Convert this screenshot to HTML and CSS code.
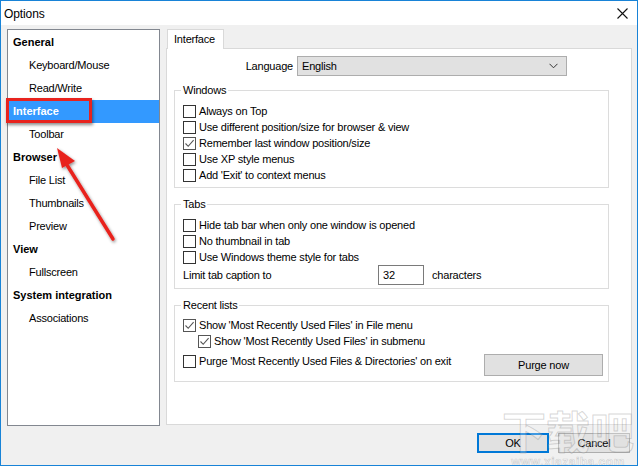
FILE: index.html
```html
<!DOCTYPE html>
<html>
<head>
<meta charset="utf-8">
<link rel="stylesheet" href="styles.css">
</head>
<body>
<div class="window">
  <div class="titlebar">
    <span class="title">Options</span>
    <svg class="close" width="11" height="11" viewBox="0 0 11 11"><path d="M0.5 0.5L10.5 10.5M10.5 0.5L0.5 10.5" stroke="#111" stroke-width="1.1" fill="none"/></svg>
  </div>
  <div class="body">
    <div class="main">
      <ul class="tree">
        <li class="cat">General</li>
        <li class="sub">Keyboard/Mouse</li>
        <li class="sub">Read/Write</li>
        <li class="cat sel">Interface</li>
        <li class="sub">Toolbar</li>
        <li class="cat">Browser</li>
        <li class="sub">File List</li>
        <li class="sub">Thumbnails</li>
        <li class="sub">Preview</li>
        <li class="cat">View</li>
        <li class="sub">Fullscreen</li>
        <li class="cat">System integration</li>
        <li class="sub">Associations</li>
      </ul>
      <div class="right">
        <div class="tabs"><div class="tab">Interface</div></div>
        <div class="panel">
          <div class="lang-row">
            <span class="lang-label">Language</span>
            <div class="select"><span>English</span>
              <svg class="chev" width="9" height="6" viewBox="0 0 9 6"><path d="M0.5 0.8L4.5 4.8L8.5 0.8" stroke="#333" stroke-width="1" fill="none"/></svg>
            </div>
          </div>
          <fieldset class="group g-win">
            <legend>Windows</legend>
            <div class="cbrow"><span class="cb"></span>Always on Top</div>
            <div class="cbrow"><span class="cb"></span>Use different position/size for browser &amp; view</div>
            <div class="cbrow"><span class="cb on"><svg width="11" height="11" viewBox="0 0 11 11"><path d="M1.5 5.5L4.2 8.3L9.6 2.2" stroke="#555" stroke-width="1.1" fill="none"/></svg></span>Remember last window position/size</div>
            <div class="cbrow"><span class="cb"></span>Use XP style menus</div>
            <div class="cbrow"><span class="cb"></span>Add 'Exit' to context menus</div>
          </fieldset>
          <fieldset class="group g-tabs">
            <legend>Tabs</legend>
            <div class="cbrow"><span class="cb"></span>Hide tab bar when only one window is opened</div>
            <div class="cbrow"><span class="cb"></span>No thumbnail in tab</div>
            <div class="cbrow"><span class="cb"></span>Use Windows theme style for tabs</div>
            <div class="limit-row">
              <span class="limit-label">Limit tab caption to</span>
              <span class="numbox">32</span>
              <span class="chars">characters</span>
            </div>
          </fieldset>
          <fieldset class="group g-recent">
            <legend>Recent lists</legend>
            <div class="cbrow"><span class="cb on"><svg width="11" height="11" viewBox="0 0 11 11"><path d="M1.5 5.5L4.2 8.3L9.6 2.2" stroke="#555" stroke-width="1.1" fill="none"/></svg></span>Show 'Most Recently Used Files' in File menu</div>
            <div class="cbrow indent"><span class="cb on"><svg width="11" height="11" viewBox="0 0 11 11"><path d="M1.5 5.5L4.2 8.3L9.6 2.2" stroke="#555" stroke-width="1.1" fill="none"/></svg></span>Show 'Most Recently Used Files' in submenu</div>
            <div class="purge-row">
              <div class="cbrow"><span class="cb"></span>Purge 'Most Recently Used Files &amp; Directories' on exit</div>
              <button class="btn purge">Purge now</button>
            </div>
          </fieldset>
        </div>
      </div>
    </div>
    <div class="footer">
      <button class="btn ok">OK</button>
      <button class="btn">Cancel</button>
    </div>
  </div>

  <div class="watermark"><span class="wm-big">下载吧</span><span class="wm-small">www.xiazaiba.com</span></div>
  <div class="mark-box"></div>
  <svg class="arrow" width="80" height="110" viewBox="0 0 80 110">
    <defs>
      <filter id="sh" x="-50%" y="-50%" width="200%" height="200%"><feDropShadow dx="1" dy="1.5" stdDeviation="1.5" flood-color="#000" flood-opacity="0.45"/></filter>
    </defs>
    <g filter="url(#sh)">
      <path d="M62 96L16 22" stroke="#e8231e" stroke-width="3.5" stroke-linecap="round" fill="none"/>
      <path d="M6 5L24 18L11 25Z" fill="#e8231e"/>
    </g>
  </svg>
</div>
</body>
</html>
```
FILE: styles.css
```css
html, body { margin: 0; padding: 0; }
body {
  font-family: "Liberation Sans", Arial, sans-serif;
  font-size: 11px;
  letter-spacing: -0.2px;
  color: #000;
  background: #fff;
}
.window {
  position: relative;
  width: 638px;
  height: 466px;
  box-sizing: border-box;
  border: 1px solid #1883d7;
  display: flex;
  flex-direction: column;
  overflow: hidden;
}
.titlebar {
  height: 24px;
  flex: none;
  background: #fff;
  display: flex;
  align-items: center;
  padding: 0 9px 0 3px;
}
.title { font-size: 12px; letter-spacing: -0.1px; padding-top: 1px; }
.close { margin-left: auto; margin-top: 1px; }

.body {
  flex: 1;
  background: #f0f0f0;
  padding: 4px 5px 0 6px;
  display: flex;
  flex-direction: column;
}
.main { display: flex; gap: 6px; }

.tree {
  list-style: none;
  margin: 0;
  padding: 1px 0 0;
  width: 153px;
  height: 397px;
  box-sizing: border-box;
  border: 1px solid #828790;
  background: #fff;
}
.tree li { height: 23px; line-height: 23px; white-space: nowrap; }
.tree .cat { font-weight: bold; padding-left: 5px; letter-spacing: 0; }
.tree .sub { padding-left: 21px; }
.tree .sel { background: #3399ff; color: #fff; }

.right { width: 466px; display: flex; flex-direction: column; }
.tabs { height: 19px; display: flex; }
.tab {
  position: relative;
  z-index: 1;
  margin-left: 1px;
  width: 57px;
  height: 20px;
  box-sizing: border-box;
  border: 1px solid #d9d9d9;
  border-bottom: none;
  background: #fff;
  padding-left: 6px;
  line-height: 19px;
}
.panel {
  height: 377px;
  box-sizing: border-box;
  border: 1px solid #d9d9d9;
  background: #fff;
  padding: 7px 22px 0 7px;
}
.lang-row {
  display: grid;
  grid-template-columns: 119px 270px;
  column-gap: 4px;
  align-items: center;
}
.lang-label { text-align: right; }
.select {
  height: 20px;
  box-sizing: border-box;
  border: 1px solid #adadad;
  background: #e1e1e1;
  display: flex;
  align-items: center;
  padding: 0 8px 0 4px;
}
.chev { margin-left: auto; }

.group {
  margin: 0;
  min-width: 0;
  border: 1px solid #dcdcdc;
  padding: 5px 5px 4px 8px;
}
.group legend {
  padding: 0 2px;
  margin-left: -2px;
  line-height: 16px;
}
.g-win { margin-top: 6px; }
.g-tabs { margin-top: 8px; padding-bottom: 3px; }
.g-recent { margin-top: 8px; padding-top: 4px; padding-bottom: 5px; }

.cbrow {
  height: 16px;
  display: flex;
  align-items: center;
  white-space: nowrap;
}
.cb {
  width: 13px;
  height: 13px;
  box-sizing: border-box;
  border: 1px solid #333;
  background: #fff;
  margin-right: 3px;
  flex: none;
  display: flex;
  align-items: center;
  justify-content: center;
}
.cb.on { border-color: #555; }
.indent { margin-left: 15px; }

.limit-row { height: 20px; display: flex; align-items: center; }
.limit-label { width: 195px; }
.numbox {
  width: 46px;
  height: 20px;
  box-sizing: border-box;
  border: 1px solid #7a7a7a;
  background: #fff;
  padding-left: 4px;
  line-height: 18px;
}
.chars { margin-left: 8px; }

.purge-row { display: flex; align-items: flex-start; margin-top: 4px; }
.btn {
  font-family: inherit;
  font-size: 11px;
  letter-spacing: -0.2px;
  color: #000;
  height: 20px;
  width: 72px;
  box-sizing: border-box;
  border: 1px solid #adadad;
  background: #e1e1e1;
  padding: 0;
  margin: 0;
}
.purge { width: 119px; height: 22px; margin: 1px 0 0 auto; }

.footer {
  display: flex;
  justify-content: flex-end;
  gap: 9px;
  padding: 7px 2px 0 0;
}
.ok { border: 2px solid #0078d7; }

.mark-box {
  position: absolute;
  left: 5px;
  top: 97px;
  width: 80px;
  height: 19px;
  border: 3px solid #e8231e;
  box-shadow: 1px 2px 3px rgba(0,0,0,0.45);
}
.arrow { position: absolute; left: 50px; top: 142px; }

.watermark {
  position: absolute;
  left: 498px;
  top: 403px;
  width: 138px;
  display: flex;
  flex-direction: column;
  align-items: center;
  white-space: nowrap;
  pointer-events: none;
}
.wm-big {
  font-family: "Noto Sans CJK SC", sans-serif;
  font-weight: bold;
  font-size: 44px;
  line-height: 52px;
  letter-spacing: 0;
  color: rgba(255,255,255,0.25);
  -webkit-text-stroke: 1px rgba(120,120,120,0.3);
}
.wm-small {
  font-family: "Liberation Sans", sans-serif;
  font-weight: bold;
  font-size: 12px;
  line-height: 12px;
  letter-spacing: 0.5px;
  color: rgba(255,255,255,0.25);
  -webkit-text-stroke: 0.6px rgba(120,120,120,0.3);
}
```
